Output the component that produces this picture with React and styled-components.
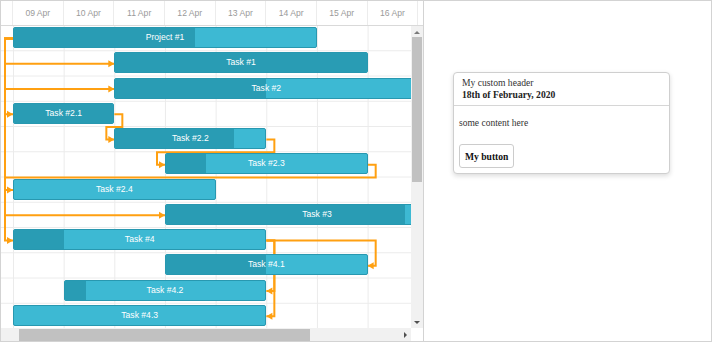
import React from 'react';
import styled, { createGlobalStyle } from 'styled-components';

const COL = 50.67;
const ORIGIN = 12;
const ROW = 25.25;
const LINK = '#ffa011';

const dayX = (d) => ORIGIN + d * COL;
const rowMid = (i) => i * ROW + 12.5;
const rowEdge = (i) => i * ROW;

const days = ['09 Apr', '10 Apr', '11 Apr', '12 Apr', '13 Apr', '14 Apr', '15 Apr', '16 Apr'];

const tasks = [
  { text: 'Project #1', start: 0, end: 6, progress: 0.6 },
  { text: 'Task #1', start: 2, end: 7, progress: 1 },
  { text: 'Task #2', start: 2, end: 8, progress: 0.5 },
  { text: 'Task #2.1', start: 0, end: 2, progress: 1 },
  { text: 'Task #2.2', start: 2, end: 5, progress: 0.79 },
  { text: 'Task #2.3', start: 3, end: 7, progress: 0.2 },
  { text: 'Task #2.4', start: 0, end: 4, progress: 0 },
  { text: 'Task #3', start: 3, end: 9, progress: 0.79 },
  { text: 'Task #4', start: 0, end: 5, progress: 0.2 },
  { text: 'Task #4.1', start: 3, end: 7, progress: 0.5 },
  { text: 'Task #4.2', start: 1, end: 5, progress: 0.105 },
  { text: 'Task #4.3', start: 0, end: 5, progress: 0 },
];

const LEFT = 4;

// start-to-start links from the project bar
const fromProject = (row, day) => [
  [dayX(0), rowMid(0)],
  [LEFT, rowMid(0)],
  [LEFT, rowMid(row)],
  [dayX(day), rowMid(row)],
];

// finish-to-start link that wraps under the source row
const wrap = (row, fromDay, toDay) => [
  [dayX(fromDay), rowMid(row)],
  [dayX(fromDay) + 8, rowMid(row)],
  [dayX(fromDay) + 8, rowEdge(row + 1)],
  [toDay === 0 ? LEFT : dayX(toDay) - 8, rowEdge(row + 1)],
  [toDay === 0 ? LEFT : dayX(toDay) - 8, rowMid(row + 1)],
  [dayX(toDay), rowMid(row + 1)],
];

// finish-to-finish links from Task #4
const finish = (row, toDay, bend) => [
  [dayX(5), rowMid(8)],
  [bend, rowMid(8)],
  [bend, rowMid(row)],
  [dayX(toDay), rowMid(row)],
];

const links = [
  fromProject(1, 2),
  fromProject(2, 2),
  fromProject(3, 0),
  fromProject(7, 3),
  fromProject(8, 0),
  wrap(3, 2, 2),
  wrap(4, 5, 3),
  wrap(5, 7, 0),
  finish(9, 7, dayX(7) + 8),
  finish(10, 5, dayX(5) + 8),
  finish(11, 5, dayX(5) + 8),
];

const arrowHead = (pts) => {
  const [x, y] = pts[pts.length - 1];
  const [px] = pts[pts.length - 2];
  const d = x > px ? 1 : -1;
  return `${x},${y} ${x - 6 * d},${y - 3.5} ${x - 6 * d},${y + 3.5}`;
};

const GlobalStyle = createGlobalStyle`
  html, body {
    margin: 0;
    padding: 0;
    background: #fff;
  }
  * {
    box-sizing: border-box;
  }
`;

const Frame = styled.div`
  width: 712px;
  height: 342px;
  border: 1px solid #d3d3d3;
  display: flex;
  overflow: hidden;
`;

const GanttPane = styled.div`
  width: 423px;
  flex-shrink: 0;
  border-right: 1px solid #d3d3d3;
  display: grid;
  grid-template-columns: 410px 12px;
  grid-template-rows: 25px 302px 13px;
  font-family: 'Liberation Sans', Arial, sans-serif;
`;

const Scale = styled.div`
  grid-column: 1 / span 2;
  display: flex;
  border-bottom: 1px solid #d9d9d9;
  overflow: hidden;
`;

const ScaleCell = styled.div`
  flex: 0 0 ${(p) => p.$w}px;
  border-right: 1px solid #ececec;
  display: flex;
  align-items: center;
  justify-content: center;
  color: #9a9a9a;
  font-size: 8.6px;
`;

const Chart = styled.div`
  position: relative;
  overflow: hidden;
  background-image: linear-gradient(to right, #ebebeb 1px, transparent 1px),
    linear-gradient(to bottom, transparent 24.25px, #ebebeb 24.25px);
  background-size: ${COL}px 100%, 100% ${ROW}px;
  background-position: ${ORIGIN}px 0, 0 0;
`;

const Links = styled.svg`
  position: absolute;
  left: 0;
  top: 0;
  width: 410px;
  height: 302px;
  z-index: 0;
`;

const Rows = styled.div`
  position: relative;
  z-index: 1;
  display: flex;
  flex-direction: column;
`;

const Row = styled.div`
  position: relative;
  height: ${ROW}px;
  flex-shrink: 0;
`;

const Bar = styled.div`
  position: absolute;
  top: 1px;
  height: 21px;
  background: #3db9d3;
  border: 1px solid #2898b0;
  border-radius: 2px;
  overflow: hidden;
`;

const Progress = styled.div`
  position: absolute;
  left: 0;
  top: 0;
  bottom: 0;
  background: #299cb4;
`;

const BarLabel = styled.div`
  position: relative;
  line-height: 19px;
  text-align: center;
  color: #fff;
  font-size: 8.6px;
  white-space: nowrap;
`;

const VScroll = styled.div`
  background: #f1f1f1;
  display: flex;
  flex-direction: column;
  align-items: center;
  padding: 5px 0 4px;
`;

const Thumb = styled.div`
  background: #c1c1c1;
  ${(p) => (p.$vertical ? 'width: 10px; height: 145px; margin-top: 3px;' : 'height: 12px; width: 291px; margin-left: 18px;')}
`;

const Arrow = styled.div`
  width: 0;
  height: 0;
  border-style: solid;
  border-color: transparent;
  ${(p) => p.$dir === 'up' && 'border-width: 0 3px 3px; border-bottom-color: #7a7a7a;'}
  ${(p) => p.$dir === 'down' && 'border-width: 3px 3px 0; border-top-color: #505050; margin-top: auto;'}
  ${(p) => p.$dir === 'right' && 'border-width: 3px 0 3px 3px; border-left-color: #505050; margin-left: auto; margin-right: 4px;'}
`;

const HScroll = styled.div`
  background: #f1f1f1;
  display: flex;
  align-items: center;
`;

const Corner = styled.div`
  background: #fff;
`;

const Side = styled.div`
  flex: 1;
  display: flex;
  align-items: flex-start;
  padding: 71px 0 0 29px;
`;

const Card = styled.div`
  width: 217px;
  border: 1px solid #cfcfcf;
  border-radius: 4px;
  box-shadow: 0 2px 5px rgba(0, 0, 0, 0.14);
  background: #fff;
  font-family: 'Liberation Serif', 'Times New Roman', serif;
  color: #222;
`;

const CardHeader = styled.div`
  padding: 4px 8px 4px;
  border-bottom: 1px solid #d6d6d6;
  line-height: 12px;
`;

const Subtitle = styled.div`
  font-size: 9.6px;
  color: #333;
`;

const Title = styled.div`
  font-size: 9.6px;
  font-weight: bold;
`;

const CardBody = styled.div`
  padding: 11px 5px 5px;
  font-size: 9.5px;
  color: #333;
  line-height: 12px;
`;

const Button = styled.button`
  margin-top: 15px;
  display: block;
  height: 24px;
  padding: 0 5px;
  background: #fff;
  border: 1px solid #cccccc;
  border-radius: 3px;
  font-family: inherit;
  font-weight: bold;
  font-size: 9.6px;
  color: #111;
`;

export default function App() {
  return (
    <>
      <GlobalStyle />
      <Frame>
        <GanttPane>
          <Scale>
            <ScaleCell $w={ORIGIN} />
            {days.map((d) => (
              <ScaleCell key={d} $w={COL}>
                {d}
              </ScaleCell>
            ))}
          </Scale>
          <Chart>
            <Links viewBox="0 0 410 302">
              {links.map((pts, i) => (
                <g key={i}>
                  <polyline
                    points={pts.map((p) => p.join(',')).join(' ')}
                    fill="none"
                    stroke={LINK}
                    strokeWidth="2"
                  />
                  <polygon points={arrowHead(pts)} fill={LINK} />
                </g>
              ))}
            </Links>
            <Rows>
              {tasks.map((t) => (
                <Row key={t.text}>
                  <Bar style={{ left: dayX(t.start), width: (t.end - t.start) * COL }}>
                    <Progress style={{ width: `${t.progress * 100}%` }} />
                    <BarLabel>{t.text}</BarLabel>
                  </Bar>
                </Row>
              ))}
            </Rows>
          </Chart>
          <VScroll>
            <Arrow $dir="up" />
            <Thumb $vertical />
            <Arrow $dir="down" />
          </VScroll>
          <HScroll>
            <Thumb />
            <Arrow $dir="right" />
          </HScroll>
          <Corner />
        </GanttPane>
        <Side>
          <Card>
            <CardHeader>
              <Subtitle>My custom header</Subtitle>
              <Title>18th of February, 2020</Title>
            </CardHeader>
            <CardBody>
              some content here
              <Button>My button</Button>
            </CardBody>
          </Card>
        </Side>
      </Frame>
    </>
  );
}
